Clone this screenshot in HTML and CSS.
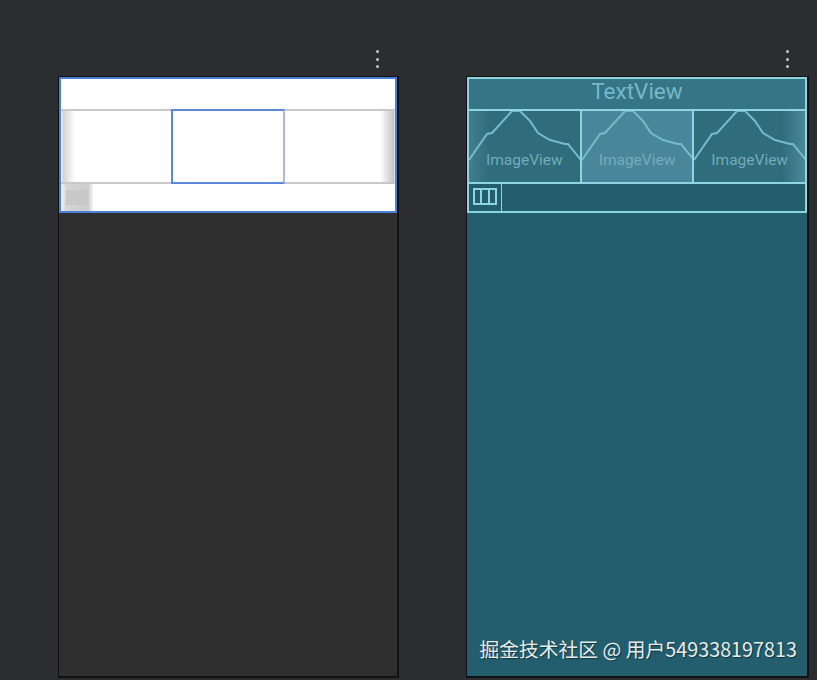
FILE: index.html
```html
<!DOCTYPE html>
<html lang="zh">
<head>
    <meta charset="UTF-8">
    <meta name="viewport" content="width=device-width, initial-scale=1.0">
    <title>ViewPager preview</title>
    <link rel="stylesheet" href="styles.css">
</head>
<body>
    <svg class="defs" width="0" height="0">
        <symbol id="mountain" viewBox="0 0 112 72">
            <polyline points="0,49 18,23 23,22 43,0 51,0 61,10 69,22 81,29 96,33 99,33 112,49" fill="none" stroke="#74bccb" stroke-width="2"/>
        </symbol>
    </svg>

    <div class="stage">
        <div class="column">
            <div class="more"><i></i><i></i><i></i></div>
            <div class="phone design">
                <div class="widget">
                    <div class="title"></div>
                    <div class="pager">
                        <div class="cell"></div>
                        <div class="cell selected"></div>
                        <div class="cell"></div>
                    </div>
                    <div class="tabs">
                        <div class="thumb"><span></span></div>
                    </div>
                </div>
            </div>
        </div>

        <div class="column wide">
            <div class="more"><i></i><i></i><i></i></div>
            <div class="phone blueprint">
                <div class="widget">
                    <div class="title">TextView</div>
                    <div class="pager">
                        <div class="cell"><svg class="mountain"><use href="#mountain"/></svg><span>ImageView</span></div>
                        <div class="cell selected"><svg class="mountain"><use href="#mountain"/></svg><span>ImageView</span></div>
                        <div class="cell"><svg class="mountain"><use href="#mountain"/></svg><span>ImageView</span></div>
                    </div>
                    <div class="tabs">
                        <div class="thumb"><span></span><span></span><span></span></div>
                    </div>
                </div>
                <div class="watermark">掘金技术社区 @ 用户549338197813</div>
            </div>
        </div>
    </div>
</body>
</html>
```

FILE: styles.css
```css
html, body { margin: 0; height: 100%; overflow: hidden; }
body { background-color: #2b2d30; font-family: Roboto, "Noto Sans CJK SC", sans-serif; }
.defs { display: block; }
.stage { display: flex; gap: 67px; padding-left: 58px; padding-top: 46px; }
.column { width: 341px; flex: none; }
.column.wide { width: 343px; }

.more { display: flex; flex-direction: column; align-items: flex-end; gap: 4.5px; height: 30px; box-sizing: border-box; padding: 4px 20px 0 0; }
.more i { display: block; width: 3px; height: 3px; border-radius: 50%; background-color: #c4c5c7; }

.phone { box-sizing: border-box; height: 602px; border: solid #111; border-width: 1px 2px 2px 1px; position: relative; }
.widget { box-sizing: border-box; height: 136px; border: 2px solid; display: flex; flex-direction: column; }
.title { height: 30px; flex: none; border-bottom: 2px solid; text-align: center; font-size: 22.5px; line-height: 25px; }
.pager { display: flex; height: 71px; flex: none; border-bottom: 2px solid; }
.cell { flex: 1; position: relative; overflow: hidden; box-sizing: border-box; }
.tabs { flex: 1; display: flex; }
.thumb { width: 32px; box-sizing: border-box; }

/* left: design view */
.design { background-color: #2f2f2f; }
.design .widget { background-color: #fff; border-color: #4a80d8; }
.design .title { border-color: #c8c8c8; }
.design .pager { border-color: #c8c8c8; background: linear-gradient(to right, #fff, #d2d2d2 2px, #fff 14px, #fff 319px, #c4c4c4 333px, #fff 334px); }
.design .cell.selected { flex: none; width: 114px; margin: -2px 0; border: 2px solid #5d86d8; border-right-color: #adb7d6; }
.design .cell:first-child { flex: none; width: 110px; }
.design .thumb { background-color: #d6d6d6; padding: 6px 5px; background-image: linear-gradient(to right, #f4f4f4, #d6d6d6 5px, #cccccc 27px, #f4f4f4); }
.design .thumb span { display: block; height: 100%; background-color: #c8c8c8; }

/* right: blueprint view */
.blueprint { background-color: #235e6e; }
.blueprint .widget { background-color: #245e6d; border-color: #8ed5e0; }
.blueprint .title { background-color: #367587; border-color: #8ed5e0; color: #74b9c8; }
.blueprint .pager { border-color: #8ed5e0; background-color: #33707f; }
.blueprint .cell { background: linear-gradient(to right, #437f90, #2f6c7c 20px); }
.blueprint .cell:last-child { background: linear-gradient(to right, #2f6c7c 88px, #4b8899); }
.blueprint .cell + .cell { border-left: 2px solid #8ed5e0; }
.blueprint .cell.selected { background: #48879b; }
.mountain { position: absolute; left: 0; top: 0; width: 112px; height: 72px; }
.blueprint .cell span { position: absolute; left: 0; right: 0; top: 39px; text-align: center; font-size: 15.5px; line-height: 20px; color: #74abb9; }
.blueprint .thumb { width: 33px; border-right: 1px solid #8ed5e0; padding: 4px 4px 6px; display: flex; }
.blueprint .thumb span { flex: 1; border: 2px solid #8ed5e0; margin-left: -2px; }
.blueprint .thumb span:first-child { margin-left: 0; }

.watermark { position: absolute; right: 10px; bottom: 14px; font-family: "Noto Sans CJK SC", sans-serif; font-size: 19.8px; line-height: 26px; color: #e4ecee; text-shadow: 1px 1px 1px rgba(0, 0, 0, 0.45); white-space: nowrap; }
```
